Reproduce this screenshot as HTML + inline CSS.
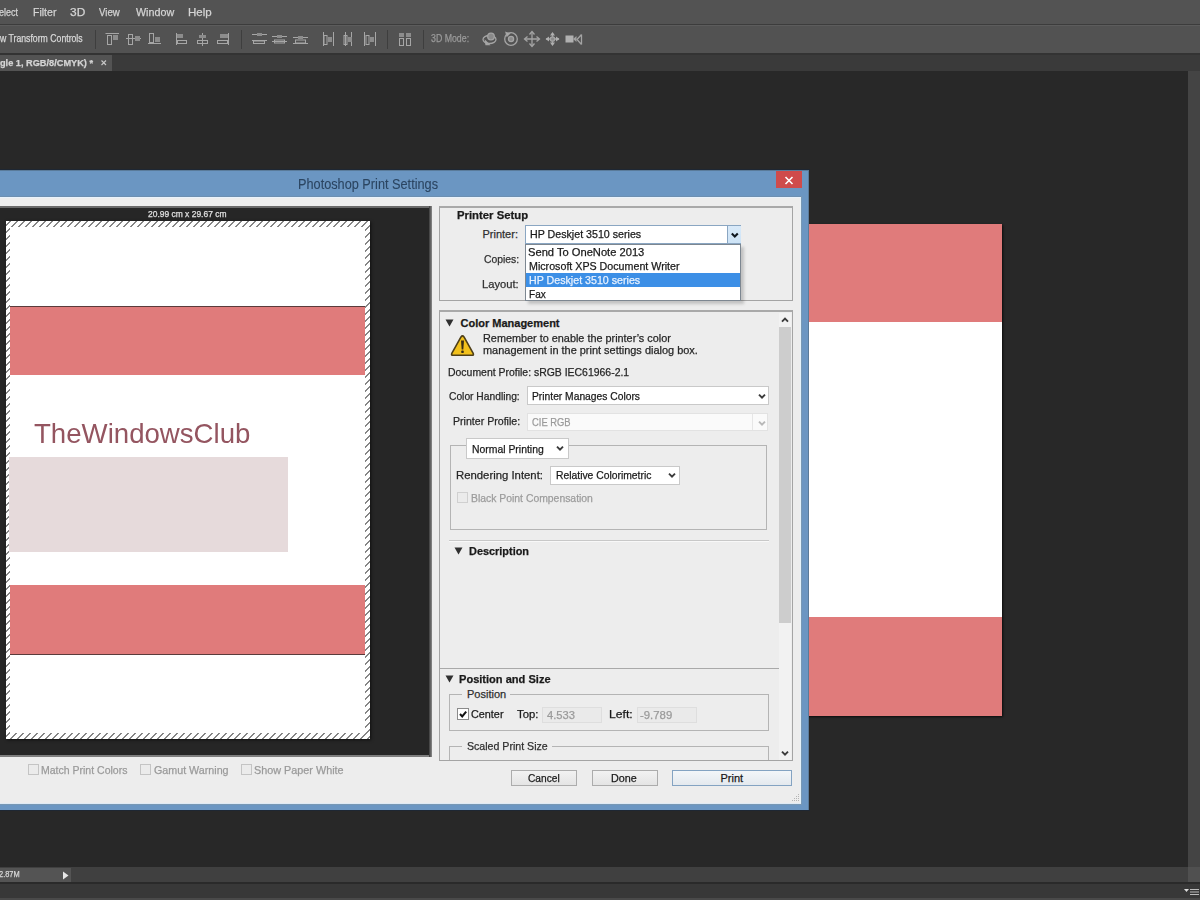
<!DOCTYPE html>
<html><head><meta charset="utf-8">
<style>
html,body{margin:0;padding:0;}
body{width:1200px;height:900px;position:relative;overflow:hidden;background:#282828;font-family:"Liberation Sans",sans-serif;}
.a{position:absolute;box-sizing:border-box;}
.t{position:absolute;white-space:pre;transform-origin:0 0;font-family:"Liberation Sans",sans-serif;-webkit-text-stroke:0.25px currentColor;}
svg{position:absolute;overflow:visible;}
</style></head><body>
<!-- menu bar -->
<div class="a" style="left:0;top:0;width:1200px;height:24px;background:#535353"></div>
<div class="a" style="left:0;top:24px;width:1200px;height:1px;background:#3c3c3c"></div>
<!-- toolbar -->
<div class="a" style="left:0;top:25px;width:1200px;height:28px;background:#525252"></div>
<div class="a" style="left:0;top:25px;width:1200px;height:1px;background:#5c5c5c"></div>
<div class="a" style="left:0;top:53px;width:1200px;height:2px;background:#333"></div>
<!-- tab bar -->
<div class="a" style="left:0;top:55px;width:1200px;height:16px;background:#3a3a3a"></div>
<div class="a" style="left:0;top:55px;width:112px;height:16px;background:#535353"></div>
<!-- canvas -->
<div class="a" style="left:0;top:71px;width:1188px;height:796px;background:#282828"></div>
<div class="a" style="left:1188px;top:71px;width:12px;height:796px;background:#444"></div>
<!-- status -->
<div class="a" style="left:0;top:867px;width:1200px;height:15px;background:#404040"></div>
<div class="a" style="left:0;top:868px;width:71px;height:14px;background:#545454"></div>
<div class="a" style="left:1188px;top:867px;width:12px;height:15px;background:#505050"></div>
<div class="a" style="left:0;top:882px;width:1200px;height:2px;background:#2a2a2a"></div>
<div class="a" style="left:0;top:884px;width:1200px;height:14px;background:#383838"></div>
<div class="a" style="left:0;top:898px;width:1200px;height:2px;background:#4a4a4a"></div>

<!-- right canvas image -->
<div class="a" style="left:800px;top:224px;width:202px;height:492px;box-shadow:1px 1px 2px rgba(0,0,0,0.7)"></div>
<div class="a" style="left:800px;top:224px;width:202px;height:98px;background:#e07b7b"></div>
<div class="a" style="left:800px;top:322px;width:202px;height:295px;background:#fff"></div>
<div class="a" style="left:800px;top:617px;width:202px;height:99px;background:#e07b7b"></div>

<!-- dialog frame -->
<div class="a" style="left:-10px;top:170px;width:819px;height:641px;background:#6b96c2;border:1px solid #5a7b9a"></div>
<div class="a" style="left:776px;top:171px;width:26px;height:17px;background:#cf4b4b"></div>
<!-- client -->
<div class="a" style="left:-10px;top:197px;width:811px;height:607px;background:#ededed"></div>
<div class="a" style="left:-10px;top:197px;width:811px;height:1px;background:#e8f2fc"></div>
<div class="a" style="left:800px;top:197px;width:1px;height:607px;background:#e4f2fa"></div>
<div class="a" style="left:801px;top:196px;width:1px;height:609px;background:#7898b4"></div>
<div class="a" style="left:-10px;top:804px;width:812px;height:1px;background:#7898b4"></div>
<div class="a" style="left:-10px;top:169px;width:820px;height:1px;background:#1e2733"></div>
<div class="a" style="left:-10px;top:810px;width:820px;height:1px;background:#1e2733"></div>
<div class="a" style="left:-10px;top:803px;width:811px;height:1px;background:#dfeaf5"></div>
<div class="a" style="left:-10px;top:196px;width:811px;height:1px;background:#6d8fb0"></div>

<!-- preview panel -->
<div class="a" style="left:-10px;top:206px;width:442px;height:551px;background:#262626;border:2px solid #7e7e7e;border-top-color:#6a6a6a;border-right:none"></div>
<div class="a" style="left:429px;top:206px;width:3px;height:551px;background:linear-gradient(to right,#3a3a3a,#8c8c8c)"></div>
<!-- paper -->
<div class="a" style="left:6px;top:221px;width:364px;height:518px;box-shadow:1px 1px 3px rgba(0,0,0,0.6)"></div>
<div class="a" style="left:6px;top:221px;width:364px;height:518px;background:#fff repeating-linear-gradient(135deg,#fff 0 2.2px,#868686 2.2px 3.6px,#fff 3.6px 4.95px)"></div>
<div class="a" style="left:10px;top:227px;width:355px;height:506px;background:#fff"></div>
<div class="a" style="left:10px;top:306px;width:355px;height:69px;background:#e07b7b;border-top:1px solid #5b3b3b"></div>
<div class="a" style="left:10px;top:585px;width:355px;height:70px;background:#e07b7b;border-bottom:1px solid #5b3b3b"></div>
<div class="a" style="left:9px;top:457px;width:279px;height:95px;background:#e6dadb"></div>

<!-- bottom checkboxes -->
<div class="a" style="left:28px;top:764px;width:11px;height:11px;border:1px solid #c4c4c4;background:#ebebeb"></div>
<div class="a" style="left:140px;top:764px;width:11px;height:11px;border:1px solid #c4c4c4;background:#ebebeb"></div>
<div class="a" style="left:241px;top:764px;width:11px;height:11px;border:1px solid #c4c4c4;background:#ebebeb"></div>

<!-- printer setup group -->
<div class="a" style="left:439px;top:206px;width:354px;height:95px;border:1px solid #a4a4a4;border-top:2px solid #a9a9a9"></div>
<div class="a" style="left:525px;top:225px;width:216px;height:19px;background:#fff;border:1px solid #8aa6c2"></div>
<div class="a" style="left:727px;top:226px;width:14px;height:17px;background:linear-gradient(#d9eaf9,#cde3f6);border-left:1px solid #8aa6c2"></div>

<!-- scroll panel -->
<div class="a" style="left:439px;top:310px;width:354px;height:451px;border:1px solid #a4a4a4;border-top:2px solid #a9a9a9"></div>
<div class="a" style="left:779px;top:313px;width:12px;height:447px;background:#f2f2f2"></div>
<div class="a" style="left:779px;top:327px;width:12px;height:296px;background:#cdcdcd"></div>

<!-- warning icon -->
<svg style="left:450px;top:334px" width="25" height="23" viewBox="0 0 25 23">
<path d="M11 2.9 Q12.5 0.9 14 2.9 L23.2 19.4 Q24 21.2 22.2 21.2 H2.8 Q1 21.2 1.8 19.4 Z" fill="#f2c11c" stroke="#4e3f18" stroke-width="1.6" stroke-linejoin="round"/>
<path d="M11 6.6 H14 L13.3 15.6 H11.7 Z" fill="#3a2e14"/>
<rect x="11.3" y="16.6" width="2.4" height="2.5" rx="0.6" fill="#3a2e14"/>
</svg>

<!-- selects -->
<div class="a" style="left:527px;top:386px;width:242px;height:19px;background:#fff;border:1px solid #c9c9c9"></div>
<div class="a" style="left:527px;top:413px;width:241px;height:18px;background:#fafafa;border:1px solid #e2e2e2"></div>
<div class="a" style="left:752px;top:414px;width:1px;height:16px;background:#e6e6e6"></div>
<!-- inner group -->
<div class="a" style="left:450px;top:445px;width:317px;height:85px;border:1px solid #b4b4b4"></div>
<div class="a" style="left:466px;top:438px;width:103px;height:21px;background:#fff;border:1px solid #c9c9c9"></div>
<div class="a" style="left:550px;top:466px;width:130px;height:19px;background:#fff;border:1px solid #c9c9c9"></div>
<div class="a" style="left:457px;top:492px;width:11px;height:11px;border:1px solid #d0d0d0;background:#ebebeb"></div>
<div class="a" style="left:449px;top:540px;width:320px;height:2px;background:#c8c8c8;border-bottom:1px solid #f8f8f8"></div>
<div class="a" style="left:440px;top:668px;width:339px;height:1px;background:#a9a9a9"></div>
<!-- position group -->
<div class="a" style="left:449px;top:694px;width:320px;height:37px;border:1px solid #b4b4b4"></div>
<div class="a" style="left:449px;top:746px;width:320px;height:14px;border:1px solid #b4b4b4;border-bottom:none"></div>
<div class="a" style="left:457px;top:708px;width:12px;height:12px;border:1px solid #8a8a8a;background:#fff"></div>
<div class="a" style="left:542px;top:707px;width:60px;height:16px;background:#eaeaea;border:1px solid #dedede"></div>
<div class="a" style="left:637px;top:707px;width:60px;height:16px;background:#eaeaea;border:1px solid #dedede"></div>

<!-- buttons -->
<div class="a" style="left:511px;top:770px;width:66px;height:16px;background:linear-gradient(#f2f2f2,#e4e4e4);border:1px solid #acacac"></div>
<div class="a" style="left:592px;top:770px;width:66px;height:16px;background:linear-gradient(#f2f2f2,#e4e4e4);border:1px solid #acacac"></div>
<div class="a" style="left:672px;top:770px;width:120px;height:16px;background:linear-gradient(#f3f6f9,#e4e9ee);border:1px solid #84a3c2"></div>


<!-- dropdown list -->
<div class="a" style="left:528px;top:247px;width:216px;height:57px;background:rgba(0,0,0,0.18);filter:blur(1.5px)"></div>
<div class="a" style="left:525px;top:244px;width:216px;height:57px;background:#fff;border:1px solid #7d8791"></div>
<div class="a" style="left:526px;top:273px;width:214px;height:14px;background:#3c8fe6"></div>
<!-- chevrons -->
<svg style="left:729px;top:230px" width="11" height="10" viewBox="0 0 11 10"><path d="M2.8 3.6 L5.8 6.6 L8.8 3.6" fill="none" stroke="#101820" stroke-width="2.1"/></svg>
<svg style="left:757px;top:392px" width="10" height="9" viewBox="0 0 10 9"><path d="M2 2.7 L5 5.7 L8 2.7" fill="none" stroke="#3a3a3a" stroke-width="1.9"/></svg>
<svg style="left:757px;top:419px" width="10" height="9" viewBox="0 0 10 9"><path d="M2 2.7 L5 5.7 L8 2.7" fill="none" stroke="#b8b8b8" stroke-width="1.9"/></svg>
<svg style="left:555px;top:444px" width="10" height="9" viewBox="0 0 10 9"><path d="M2 2.7 L5 5.7 L8 2.7" fill="none" stroke="#3a3a3a" stroke-width="1.9"/></svg>
<svg style="left:667px;top:471px" width="10" height="9" viewBox="0 0 10 9"><path d="M2 2.7 L5 5.7 L8 2.7" fill="none" stroke="#3a3a3a" stroke-width="1.9"/></svg>
<svg style="left:780px;top:316px" width="10" height="9" viewBox="0 0 10 9"><path d="M2 5.7 L5 2.7 L8 5.7" fill="none" stroke="#3a3a3a" stroke-width="1.9"/></svg>
<svg style="left:780px;top:749px" width="10" height="9" viewBox="0 0 10 9"><path d="M2 2.7 L5 5.7 L8 2.7" fill="none" stroke="#3a3a3a" stroke-width="1.9"/></svg>
<!-- section triangles -->
<svg style="left:445px;top:319px" width="9" height="8" viewBox="0 0 9 8"><path d="M0.5 0.5 H8.5 L4.5 7.5 Z" fill="#303030"/></svg>
<svg style="left:454px;top:547px" width="9" height="8" viewBox="0 0 9 8"><path d="M0.5 0.5 H8.5 L4.5 7.5 Z" fill="#303030"/></svg>
<svg style="left:445px;top:675px" width="9" height="8" viewBox="0 0 9 8"><path d="M0.5 0.5 H8.5 L4.5 7.5 Z" fill="#303030"/></svg>
<!-- group label gaps -->
<div class="a" style="left:462px;top:692px;width:48px;height:5px;background:#ededed"></div>
<div class="a" style="left:462px;top:744px;width:90px;height:5px;background:#ededed"></div>
<!-- checkmark -->
<svg style="left:457px;top:708px" width="12" height="12" viewBox="0 0 12 12"><path d="M3 6 L5.2 8.4 L9.2 3.6" fill="none" stroke="#111" stroke-width="2"/></svg>
<!-- close X -->
<svg style="left:783px;top:175px" width="12" height="11" viewBox="0 0 12 11"><path d="M2.5 2 L9.5 9 M9.5 2 L2.5 9" stroke="#fff" stroke-width="1.6"/></svg>
<!-- tab close -->
<svg style="left:100px;top:59px" width="8" height="8" viewBox="0 0 8 8"><path d="M1.5 1.5 L6 6 M6 1.5 L1.5 6" stroke="#c8c8c8" stroke-width="1.1"/></svg>
<!-- status arrow -->
<svg style="left:62px;top:871px" width="8" height="9" viewBox="0 0 8 9"><path d="M1 0.5 L6.5 4.5 L1 8.5 Z" fill="#e8e8e8"/></svg>
<!-- panel menu icon bottom right -->
<svg style="left:1184px;top:888px" width="16" height="8" viewBox="0 0 16 8"><path d="M0 1 H5 L2.5 4 Z" fill="#ddd"/><path d="M6 1.5 H15 M6 4 H15 M6 6.5 H15" stroke="#bbb" stroke-width="1"/></svg>


<!-- toolbar separators -->
<div class="a" style="left:95px;top:30px;width:1px;height:19px;background:#3e3e3e"></div>
<div class="a" style="left:241px;top:30px;width:1px;height:19px;background:#3e3e3e"></div>
<div class="a" style="left:387px;top:30px;width:1px;height:19px;background:#3e3e3e"></div>
<div class="a" style="left:423px;top:30px;width:1px;height:19px;background:#3e3e3e"></div>
<!-- toolbar icons -->
<svg style="left:0;top:0" width="1200" height="60" viewBox="0 0 1200 60">
<g fill="none" stroke="#a6a6a6" stroke-width="1">
<!-- align top -->
<path d="M105.5 33.5 H119"/><rect x="107.5" y="35.5" width="4" height="9"/>
<!-- align v center -->
<path d="M126 38.5 H141"/><rect x="128.5" y="34.5" width="4" height="10"/>
<!-- align bottom -->
<path d="M148 43.5 H161"/><rect x="149.5" y="33.5" width="4" height="9"/>
<!-- align left -->
<path d="M176.5 33 V45"/><rect x="177.5" y="40.5" width="9" height="3"/>
<!-- align h center -->
<path d="M202.5 33 V46"/><rect x="197.5" y="40.5" width="10" height="3"/>
<!-- align right -->
<path d="M228.5 33 V45"/><rect x="217.5" y="40.5" width="10" height="3"/>
<!-- distribute top -->
<path d="M252 34.5 H267 M252 40.5 H267"/><rect x="253.5" y="41" width="11" height="2.5"/>
<path d="M272 36.5 H287 M272 41.5 H287"/><rect x="274.5" y="40" width="10" height="3"/>
<path d="M293 37.5 H308 M293 43.5 H308"/><rect x="295.5" y="40" width="10" height="3"/>
<!-- distribute left -->
<path d="M323.5 32 V46 M333.5 32 V46"/><rect x="324" y="35.5" width="3" height="9"/>
<path d="M345.5 32 V46 M351.5 32 V46"/><rect x="344" y="35.5" width="3" height="9"/>
<path d="M364.5 32 V46 M375.5 32 V46"/><rect x="366" y="35.5" width="3" height="9"/>
<!-- auto align -->
<rect x="399.5" y="38.5" width="4" height="7"/><rect x="406.5" y="38.5" width="4" height="7"/>
</g>
<g fill="#8c8c8c">
<rect x="113" y="35" width="5" height="5"/><rect x="135" y="36" width="5" height="5"/><rect x="155" y="37" width="5" height="5"/>
<rect x="177" y="34" width="6" height="4"/><rect x="199" y="35" width="7" height="3"/><rect x="220" y="34" width="8" height="4"/>
<rect x="257" y="33" width="5" height="3"/><rect x="277" y="35" width="5" height="3"/><rect x="298" y="36" width="5" height="3"/>
<rect x="328" y="37" width="4" height="5"/><rect x="348" y="37" width="4" height="5"/><rect x="370" y="37" width="4" height="5"/>
<rect x="399" y="33" width="5" height="4"/><rect x="406" y="33" width="5" height="4"/>
</g>
<!-- 3D icons -->
<g fill="none" stroke="#a4a4a4" stroke-width="1.3">
<ellipse cx="489.5" cy="39.5" rx="6.5" ry="4"/>
<circle cx="491" cy="36.5" r="3.3" fill="#8a8a8a"/>
<path d="M485.5 41 L489 44.5 L486 44.5 Z" fill="#b0b0b0"/>
<circle cx="511" cy="39" r="6.3"/>
<circle cx="511" cy="39" r="2.6" fill="#8a8a8a"/>
<path d="M506 32.5 L509.5 33.5 L507 36 Z" fill="#b0b0b0"/>
<path d="M532 32 V46 M525 39 H539"/>
<path d="M529.5 34.5 L532 31.5 L534.5 34.5 M529.5 43.5 L532 46.5 L534.5 43.5 M527.5 36.5 L524.5 39 L527.5 41.5 M536.5 36.5 L539.5 39 L536.5 41.5"/>
<path d="M546 39 H559 M552.5 33 V45"/>
<circle cx="552.5" cy="39" r="2.2" fill="#8a8a8a"/>
<path d="M549 36.5 L545.5 39 L549 41.5 Z M556 36.5 L559.5 39 L556 41.5 Z M550 35.5 L552.5 32 L555 35.5 Z M550 42.5 L552.5 46 L555 42.5 Z" fill="#b0b0b0" stroke="none"/>
<path d="M581.5 34.5 L577 39.5 L581.5 44.5 M581.5 34.5 V44.5"/>
</g>
<rect x="565.5" y="35.5" width="8" height="7" fill="#b0b0b0"/><path d="M573 39 L576.5 36 V42 Z" fill="#a0a0a0"/>
</svg>

<svg style="left:791px;top:793px" width="10" height="10" viewBox="0 0 10 10"><g fill="#b4b4b4"><rect x="7" y="1" width="1" height="1"/><rect x="5" y="3" width="1" height="1"/><rect x="7" y="3" width="1" height="1"/><rect x="3" y="5" width="1" height="1"/><rect x="5" y="5" width="1" height="1"/><rect x="7" y="5" width="1" height="1"/><rect x="1" y="7" width="1" height="1"/><rect x="3" y="7" width="1" height="1"/><rect x="5" y="7" width="1" height="1"/><rect x="7" y="7" width="1" height="1"/></g></svg>
<span class="t" style="left:-0.82px;top:7.00px;font-size:11px;line-height:11px;font-weight:400;color:#d4d4d4;transform:scaleX(0.8182);">elect</span>
<span class="t" style="left:33.04px;top:7.00px;font-size:11px;line-height:11px;font-weight:400;color:#d4d4d4;transform:scaleX(0.9565);">Filter</span>
<span class="t" style="left:69.92px;top:7.00px;font-size:11px;line-height:11px;font-weight:400;color:#d4d4d4;transform:scaleX(1.0833);">3D</span>
<span class="t" style="left:99.00px;top:7.00px;font-size:11px;line-height:11px;font-weight:400;color:#d4d4d4;transform:scaleX(0.8750);">View</span>
<span class="t" style="left:136.00px;top:7.00px;font-size:11px;line-height:11px;font-weight:400;color:#d4d4d4;transform:scaleX(0.9744);">Window</span>
<span class="t" style="left:187.95px;top:7.00px;font-size:11px;line-height:11px;font-weight:400;color:#d4d4d4;transform:scaleX(1.0476);">Help</span>
<span class="t" style="left:0.00px;top:33.00px;font-size:10.5px;line-height:10.5px;font-weight:400;color:#d8d8d8;transform:scaleX(0.8283);">w Transform Controls</span>
<span class="t" style="left:431.12px;top:34.00px;font-size:10px;line-height:10px;font-weight:400;color:#9a9a9a;transform:scaleX(0.8780);">3D Mode:</span>
<span class="t" style="left:0.00px;top:59.00px;font-size:9px;line-height:9px;font-weight:700;color:#d4d4d4;transform:scaleX(1.0220);">gle 1, RGB/8/CMYK) *</span>
<span class="t" style="left:298.09px;top:177.00px;font-size:14px;line-height:14px;font-weight:400;color:#2b4561;transform:scaleX(0.9085);-webkit-text-stroke:0.1px currentColor;">Photoshop Print Settings</span>
<span class="t" style="left:148.06px;top:210.00px;font-size:9px;line-height:9px;font-weight:400;color:#e0e0e0;transform:scaleX(0.9390);">20.99 cm x 29.67 cm</span>
<span class="t" style="left:34.01px;top:420.00px;font-size:28px;line-height:28px;font-weight:400;color:#945560;transform:scaleX(0.9862);-webkit-text-stroke:0;">TheWindowsClub</span>
<span class="t" style="left:457.47px;top:210.00px;font-size:11px;line-height:11px;font-weight:700;color:#1a1a1a;transform:scaleX(1.0294);">Printer Setup</span>
<span class="t" style="left:482.50px;top:229.00px;font-size:11px;line-height:11px;font-weight:400;color:#303030;transform:scaleX(1.0000);">Printer:</span>
<span class="t" style="left:483.56px;top:254.00px;font-size:11px;line-height:11px;font-weight:400;color:#303030;transform:scaleX(0.9429);">Copies:</span>
<span class="t" style="left:481.99px;top:279.00px;font-size:11px;line-height:11px;font-weight:400;color:#303030;transform:scaleX(1.0147);">Layout:</span>
<span class="t" style="left:530.03px;top:229.00px;font-size:11px;line-height:11px;font-weight:400;color:#1a1a1a;transform:scaleX(0.9690);">HP Deskjet 3510 series</span>
<span class="t" style="left:528.49px;top:247.00px;font-size:11px;line-height:11px;font-weight:400;color:#1a1a1a;transform:scaleX(1.0133);">Send To OneNote 2013</span>
<span class="t" style="left:528.53px;top:261.00px;font-size:11px;line-height:11px;font-weight:400;color:#1a1a1a;transform:scaleX(0.9708);">Microsoft XPS Document Writer</span>
<span class="t" style="left:528.53px;top:275.00px;font-size:11px;line-height:11px;font-weight:400;color:#e8f2ff;transform:scaleX(0.9690);">HP Deskjet 3510 series</span>
<span class="t" style="left:528.59px;top:288.50px;font-size:11px;line-height:11px;font-weight:400;color:#1a1a1a;transform:scaleX(0.9118);">Fax</span>
<span class="t" style="left:460.50px;top:317.50px;font-size:11px;line-height:11px;font-weight:700;color:#1a1a1a;transform:scaleX(1.0000);">Color Management</span>
<span class="t" style="left:483.01px;top:332.50px;font-size:11px;line-height:11px;font-weight:400;color:#262626;transform:scaleX(0.9868);">Remember to enable the printer’s color</span>
<span class="t" style="left:483.00px;top:344.50px;font-size:11px;line-height:11px;font-weight:400;color:#262626;transform:scaleX(0.9953);">management in the print settings dialog box.</span>
<span class="t" style="left:448.05px;top:366.50px;font-size:11px;line-height:11px;font-weight:400;color:#262626;transform:scaleX(0.9497);">Document Profile: sRGB IEC61966-2.1</span>
<span class="t" style="left:449.07px;top:390.50px;font-size:11px;line-height:11px;font-weight:400;color:#262626;transform:scaleX(0.9324);">Color Handling:</span>
<span class="t" style="left:532.07px;top:391.00px;font-size:11px;line-height:11px;font-weight:400;color:#1a1a1a;transform:scaleX(0.9342);">Printer Manages Colors</span>
<span class="t" style="left:452.54px;top:416.00px;font-size:11px;line-height:11px;font-weight:400;color:#262626;transform:scaleX(0.9632);">Printer Profile:</span>
<span class="t" style="left:532.15px;top:416.50px;font-size:11px;line-height:11px;font-weight:400;color:#9a9a9a;transform:scaleX(0.8523);">CIE RGB</span>
<span class="t" style="left:471.55px;top:444.00px;font-size:11px;line-height:11px;font-weight:400;color:#1a1a1a;transform:scaleX(0.9459);">Normal Printing</span>
<span class="t" style="left:455.97px;top:469.50px;font-size:11px;line-height:11px;font-weight:400;color:#262626;transform:scaleX(1.0305);">Rendering Intent:</span>
<span class="t" style="left:555.56px;top:470.00px;font-size:11px;line-height:11px;font-weight:400;color:#1a1a1a;transform:scaleX(0.9400);">Relative Colorimetric</span>
<span class="t" style="left:470.56px;top:492.50px;font-size:11px;line-height:11px;font-weight:400;color:#9c9c9c;transform:scaleX(0.9449);">Black Point Compensation</span>
<span class="t" style="left:468.51px;top:545.50px;font-size:11px;line-height:11px;font-weight:700;color:#1a1a1a;transform:scaleX(0.9915);">Description</span>
<span class="t" style="left:459.49px;top:673.50px;font-size:11px;line-height:11px;font-weight:700;color:#1a1a1a;transform:scaleX(1.0056);">Position and Size</span>
<span class="t" style="left:467.00px;top:688.50px;font-size:11px;line-height:11px;font-weight:400;color:#303030;transform:scaleX(1.0000);">Position</span>
<span class="t" style="left:470.52px;top:709.00px;font-size:11px;line-height:11px;font-weight:400;color:#1a1a1a;transform:scaleX(0.9844);">Center</span>
<span class="t" style="left:517.00px;top:709.00px;font-size:11px;line-height:11px;font-weight:400;color:#1a1a1a;transform:scaleX(1.0250);">Top:</span>
<span class="t" style="left:547.00px;top:710.00px;font-size:11px;line-height:11px;font-weight:400;color:#9a9a9a;transform:scaleX(1.0185);">4.533</span>
<span class="t" style="left:609.39px;top:709.00px;font-size:11px;line-height:11px;font-weight:400;color:#1a1a1a;transform:scaleX(1.1053);">Left:</span>
<span class="t" style="left:639.97px;top:710.00px;font-size:11px;line-height:11px;font-weight:400;color:#9a9a9a;transform:scaleX(1.0333);">-9.789</span>
<span class="t" style="left:467.04px;top:740.50px;font-size:11px;line-height:11px;font-weight:400;color:#303030;transform:scaleX(0.9634);">Scaled Print Size</span>
<span class="t" style="left:528.08px;top:773.00px;font-size:11px;line-height:11px;font-weight:400;color:#1a1a1a;transform:scaleX(0.9242);">Cancel</span>
<span class="t" style="left:610.52px;top:773.00px;font-size:11px;line-height:11px;font-weight:400;color:#1a1a1a;transform:scaleX(0.9800);">Done</span>
<span class="t" style="left:720.50px;top:773.00px;font-size:11px;line-height:11px;font-weight:400;color:#1a1a1a;transform:scaleX(1.0000);">Print</span>
<span class="t" style="left:40.54px;top:764.50px;font-size:11px;line-height:11px;font-weight:400;color:#9a9a9a;transform:scaleX(0.9551);">Match Print Colors</span>
<span class="t" style="left:153.53px;top:764.50px;font-size:11px;line-height:11px;font-weight:400;color:#9a9a9a;transform:scaleX(0.9733);">Gamut Warning</span>
<span class="t" style="left:254.02px;top:764.50px;font-size:11px;line-height:11px;font-weight:400;color:#9a9a9a;transform:scaleX(0.9833);">Show Paper White</span>
<span class="t" style="left:-0.83px;top:870.00px;font-size:9px;line-height:9px;font-weight:400;color:#d8d8d8;transform:scaleX(0.8261);">2.87M</span>
</body></html>
